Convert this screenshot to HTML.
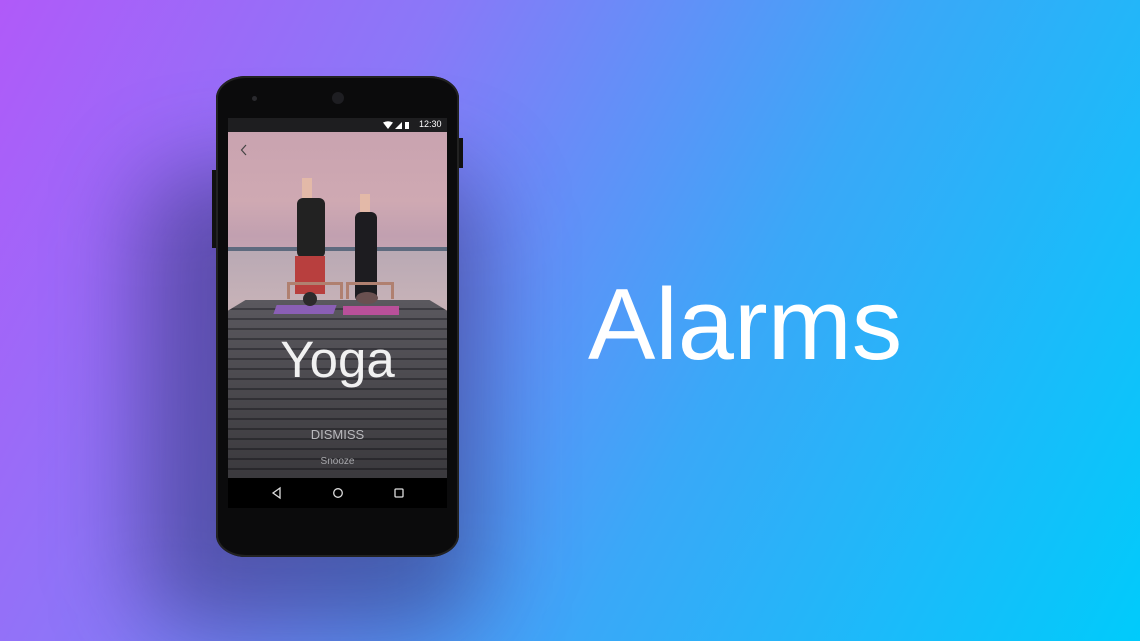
<!DOCTYPE html>
<html><head><style>
html,body{margin:0;padding:0}
body{width:1140px;height:641px;overflow:hidden;position:relative;background:linear-gradient(118deg,#b05af9 0%,#8a78f8 30%,#3aa8f8 62%,#00cbfb 100%);font-family:"Liberation Sans",sans-serif}
.shadow{position:absolute;left:140px;top:170px;width:340px;height:460px;border-radius:60px;background:rgba(40,40,100,.5);filter:blur(45px)}
.phone{position:absolute;left:216px;top:76px;width:243px;height:481px;background:#0b0b0c;border-radius:30px/22px;box-shadow:inset 0 0 0 2px #222}
.btn{position:absolute;background:#111}
.screen{position:absolute;left:228px;top:118px;width:219px;height:390px;background:#000;overflow:hidden}
.status{position:absolute;left:0;top:0;width:219px;height:14px;background:#1e1e20;color:#fff;font-size:9px}
.img{position:absolute;left:0;top:14px;width:219px;height:346px;background:linear-gradient(#c9a3b0 0%,#cfa9b2 20%,#c1a0b0 30%,#d6b2b6 50%,#c6adb5 58%)}
.water{position:absolute;left:0;top:118px;width:219px;height:60px;background:linear-gradient(#b9a9b4,#c8b3b8)}
.dock{position:absolute;left:0;top:168px;width:219px;height:178px;background:repeating-linear-gradient(#5a585e 0 8px,#3d3c42 8px 10px);clip-path:polygon(8% 0,92% 0,100% 6%,100% 100%,0 100%,0 6%)}
.dockdark{position:absolute;left:0;top:168px;width:219px;height:178px;background:linear-gradient(rgba(0,0,0,0),rgba(0,0,0,.35))}
.nav{position:absolute;left:0;top:360px;width:219px;height:30px;background:#000}
</style></head><body>
<div class="shadow"></div>
<div class="btn" style="left:212px;top:170px;width:5px;height:78px"></div>
<div class="btn" style="left:458px;top:138px;width:5px;height:30px"></div>
<div class="phone">
  <div style="position:absolute;left:36px;top:20px;width:5px;height:5px;border-radius:50%;background:#2a2a2e"></div>
  <div style="position:absolute;left:116px;top:16px;width:12px;height:12px;border-radius:50%;background:#1e1e22"></div>
</div>
<div class="screen">
  <div class="status">
    <svg style="position:absolute;left:155px;top:3px" width="28" height="9" viewBox="0 0 28 9"><path d="M0 1.5 Q5 -1 10 1.5 L5 8Z" fill="#fff"/><path d="M12 8 L19 1 V8Z" fill="#fff"/><rect x="22" y="1" width="4" height="7" fill="#fff"/></svg>
    <span style="position:absolute;left:191px;top:1px">12:30</span>
  </div>
  <div class="img">
    <div class="water"></div>
    <div style="position:absolute;left:0;top:115px;width:219px;height:4px;background:#5e6a7e"></div>
    <div class="dock"></div>
    <div class="dockdark"></div>
    <div style="position:absolute;left:47px;top:173px;width:60px;height:9px;background:#8a5fb5;transform:skewX(-20deg)"></div>
    <div style="position:absolute;left:115px;top:174px;width:56px;height:9px;background:#b9509a"></div>
    <div style="position:absolute;left:74px;top:46px;width:10px;height:20px;background:#e3b9a8"></div>
    <div style="position:absolute;left:69px;top:66px;width:28px;height:60px;background:#222;border-radius:6px"></div>
    <div style="position:absolute;left:67px;top:124px;width:30px;height:38px;background:#b83f3e"></div>
    <div style="position:absolute;left:59px;top:150px;width:50px;height:14px;border:3px solid #b08070;border-bottom:none"></div>
    <div style="position:absolute;left:75px;top:160px;width:14px;height:14px;border-radius:50%;background:#2d2a2c"></div>
    <div style="position:absolute;left:132px;top:62px;width:10px;height:18px;background:#e3b9a8"></div>
    <div style="position:absolute;left:127px;top:80px;width:22px;height:90px;background:#1d1c20;border-radius:6px"></div>
    <div style="position:absolute;left:118px;top:150px;width:42px;height:14px;border:3px solid #b08070;border-bottom:none"></div>
    <div style="position:absolute;left:128px;top:160px;width:22px;height:12px;border-radius:50%;background:#6a5050"></div>
    <svg style="position:absolute;left:12px;top:12px" width="8" height="12" viewBox="0 0 8 12"><path d="M6 1 L1.5 6 L6 11" stroke="#444" stroke-width="1.2" fill="none"/></svg>
    <div style="position:absolute;left:0;top:198px;width:219px;text-align:center;color:rgba(255,255,255,.92);font-size:51px;line-height:60px">Yoga</div>
    <div style="position:absolute;left:0;top:295px;width:219px;text-align:center;color:#b8b8bc;font-size:13px">DISMISS</div>
    <div style="position:absolute;left:0;top:324px;width:219px;text-align:center;color:#a8a8ac;font-size:10px">Snooze</div>
  </div>
  <div class="nav">
    <svg width="219" height="30" viewBox="0 0 219 30"><path d="M52 10 L45 15 L52 20Z" fill="none" stroke="#ddd" stroke-width="1.3"/><circle cx="110" cy="15" r="4.3" fill="none" stroke="#ddd" stroke-width="1.3"/><rect x="167" y="11" width="8" height="8" rx="1" fill="none" stroke="#ddd" stroke-width="1.3"/></svg>
  </div>
</div>
<div style="position:absolute;left:588px;top:270px;color:#fff;font-size:101px;line-height:110px">Alarms</div>
</body></html>
